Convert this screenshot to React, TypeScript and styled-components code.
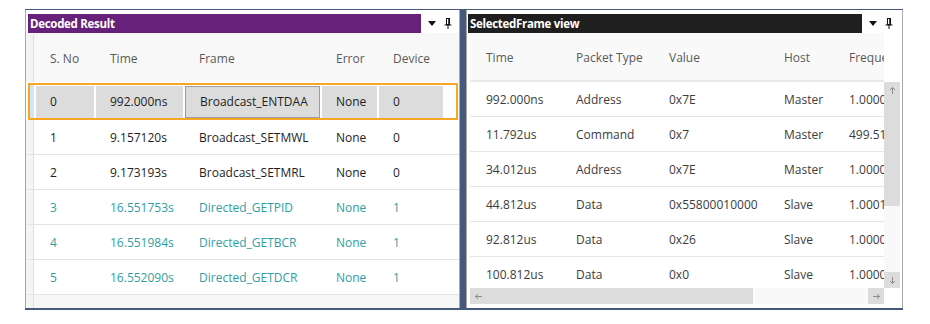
import React from "react";
import styled, { createGlobalStyle } from "styled-components";

const GlobalStyle = createGlobalStyle`
  body {
    margin: 0;
    background: #ffffff;
    font-family: "Open Sans", "Noto Sans", sans-serif;
  }
`;

const Frame = styled.div`
  margin: 9px 0 0 25px;
  width: 878px;
  height: 301px;
  box-sizing: border-box;
  padding: 1px 0 2px;
  display: flex;
  gap: 6px;
  background: #46597b;
`;

const Panel = styled.section<{ $w: number }>`
  width: ${(p) => p.$w}px;
  box-sizing: border-box;
  background: #ffffff;
  border-left: 1px solid #a9a9a9;
  border-right: 1px solid #a9a9a9;
  padding-top: 4px;
  display: flex;
  flex-direction: column;
  overflow: hidden;
`;

const TitleRow = styled.div<{ $pad: number }>`
  height: 19px;
  display: flex;
  padding-left: ${(p) => p.$pad}px;
  flex-shrink: 0;
`;

const TitleBar = styled.div<{ $bg: string }>`
  flex: 1;
  background: ${(p) => p.$bg};
  color: #ffffff;
  font-size: 11.5px;
  font-weight: 700;
  line-height: 19px;
  padding-left: 2px;
  letter-spacing: -0.3px;
  white-space: nowrap;
`;

const TitleTools = styled.div<{ $w: number }>`
  width: ${(p) => p.$w}px;
  box-sizing: border-box;
  flex-shrink: 0;
  display: flex;
  align-items: center;
  padding-left: 7px;
  gap: 8px;
`;

/* ---------- left grid ---------- */

const Gutter = styled.div<{ $sel?: boolean }>`
  width: ${(p) => (p.$sel ? 4 : 7)}px;
  align-self: stretch;
  flex-shrink: 0;
  background: ${(p) => (p.$sel ? "#cfe8f6" : "#f4f4f4")};
  border-right: ${(p) => (p.$sel ? "none" : "1px solid #dedede")};
`;

const LeftHeader = styled.div`
  height: 49px;
  display: flex;
  align-items: center;
  padding-top: 2px;
  box-sizing: border-box;
  background: #f8f8f8;
  flex-shrink: 0;
`;

const LeftRow = styled.div<{ $sel?: boolean }>`
  display: flex;
  align-items: center;
  flex-shrink: 0;
  box-sizing: border-box;
  height: ${(p) => (p.$sel ? 37 : 35)}px;
  margin: ${(p) => (p.$sel ? "1px 1px 0 2px" : "0")};
  border: ${(p) => (p.$sel ? "2px solid #f6a623" : "none")};
  border-bottom: ${(p) =>
    p.$sel ? "2px solid #f6a623" : "1px solid #e4e4e4"};
`;

const Cell = styled.div<{
  $w: number;
  $sel?: boolean;
  $focus?: boolean;
  $color?: string;
}>`
  width: ${(p) => p.$w}px;
  margin-left: 2px;
  box-sizing: border-box;
  height: ${(p) => (p.$sel ? "32px" : "auto")};
  display: flex;
  align-items: center;
  padding-left: 14px;
  font-size: 12px;
  color: ${(p) => p.$color ?? "#1e1e1e"};
  white-space: nowrap;
  background: ${(p) => (p.$sel ? "#dcdcdc" : "transparent")};
  border: ${(p) => (p.$focus ? "1px solid #9d9d9d" : "none")};
`;

const HeadCell = styled(Cell)`
  color: #595959;
`;

const LeftFiller = styled.div`
  flex: 1;
  display: flex;
  background: #f6f6f6;
`;

/* ---------- right grid ---------- */

const RightHeader = styled.div`
  height: 49px;
  display: flex;
  flex-shrink: 0;
`;

const HeaderViewport = styled.div`
  width: 414px;
  margin-left: 3px;
  display: flex;
  align-items: center;
  padding-top: 2px;
  overflow: hidden;
  background: #f9f9f9;
  border-bottom: 2px solid #e8e8e8;
  box-sizing: border-box;
`;

const Middle = styled.div`
  height: 206px;
  display: flex;
  flex-shrink: 0;
`;

const RowsViewport = styled.div`
  width: 414px;
  margin-left: 3px;
  overflow: hidden;
`;

const RightRow = styled.div`
  height: 35px;
  box-sizing: border-box;
  display: flex;
  align-items: center;
  border-bottom: 1px solid #e6e6e6;
`;

const RCell = styled.div<{ $w: number; $head?: boolean }>`
  width: ${(p) => p.$w}px;
  flex-shrink: 0;
  box-sizing: border-box;
  padding-left: 16px;
  font-size: 12px;
  white-space: nowrap;
  color: ${(p) => (p.$head ? "#595959" : "#3c3c3c")};
`;

const VScroll = styled.div`
  width: 16px;
  display: flex;
  flex-direction: column;
  background: #f9f9f9;
`;

const ScrollBtn = styled.div<{ $shade?: boolean }>`
  width: 16px;
  height: 16px;
  flex-shrink: 0;
  display: flex;
  align-items: center;
  justify-content: center;
  background: ${(p) => (p.$shade ? "#dcdcdc" : "transparent")};
`;

const VThumb = styled.div`
  height: 108px;
  background: #dcdcdc;
`;

const Track = styled.div`
  flex: 1;
`;

const HScroll = styled.div`
  height: 16px;
  width: 414px;
  margin-left: 3px;
  display: flex;
  flex-shrink: 0;
  background: #f9f9f9;
`;

const HThumb = styled.div`
  width: 283px;
  display: flex;
  align-items: center;
  background: #dcdcdc;
`;

/* ---------- icons ---------- */

const DropIcon = () => (
  <svg width="8" height="5" viewBox="0 0 8 5">
    <polygon points="0,0 8,0 4,5" fill="#111" />
  </svg>
);

const PinIcon = () => (
  <svg width="8" height="11" viewBox="0 0 8 11">
    <rect x="2.5" y="0.5" width="3" height="6" fill="none" stroke="#111" />
    <line x1="5" y1="0.5" x2="5" y2="6.5" stroke="#111" strokeWidth="1.5" />
    <line x1="0.5" y1="7" x2="7.5" y2="7" stroke="#111" />
    <line x1="4" y1="7" x2="4" y2="11" stroke="#111" />
  </svg>
);

const Arrow = ({ dir }: { dir: "up" | "down" | "left" | "right" }) => {
  const rot = { up: 0, right: 90, down: 180, left: 270 }[dir];
  return (
    <svg
      width="9"
      height="9"
      viewBox="0 0 9 9"
      style={{ transform: `rotate(${rot}deg)` }}
    >
      <path
        d="M4.5 1.5 L4.5 8 M2 4 L4.5 1.5 L7 4"
        fill="none"
        stroke="#8c8c8c"
        strokeWidth="1"
      />
    </svg>
  );
};

/* ---------- data ---------- */

const leftCols = [58, 87, 135, 55, 64];
const leftHead = ["S. No", "Time", "Frame", "Error", "Device"];
const teal = "#2f9ea4";
const leftRows = [
  ["0", "992.000ns", "Broadcast_ENTDAA", "None", "0"],
  ["1", "9.157120s", "Broadcast_SETMWL", "None", "0"],
  ["2", "9.173193s", "Broadcast_SETMRL", "None", "0"],
  ["3", "16.551753s", "Directed_GETPID", "None", "1"],
  ["4", "16.551984s", "Directed_GETBCR", "None", "1"],
  ["5", "16.552090s", "Directed_GETDCR", "None", "1"],
];

const rightCols = [90, 93, 115, 65, 100];
const rightHead = ["Time", "Packet Type", "Value", "Host", "Frequency"];
const rightRows = [
  ["992.000ns", "Address", "0x7E", "Master", "1.000000"],
  ["11.792us", "Command", "0x7", "Master", "499.5134"],
  ["34.012us", "Address", "0x7E", "Master", "1.000000"],
  ["44.812us", "Data", "0x55800010000", "Slave", "1.000100"],
  ["92.812us", "Data", "0x26", "Slave", "1.000000"],
  ["100.812us", "Data", "0x0", "Slave", "1.000000"],
];

export default function App() {
  return (
    <>
      <GlobalStyle />
      <Frame>
        <Panel $w={435}>
          <TitleRow $pad={2}>
            <TitleBar $bg="#68217a">Decoded Result</TitleBar>
            <TitleTools $w={38}>
              <DropIcon />
              <PinIcon />
            </TitleTools>
          </TitleRow>
          <LeftHeader>
            <Gutter />
            {leftHead.map((h, i) => (
              <HeadCell key={h} $w={leftCols[i]}>
                {h}
              </HeadCell>
            ))}
          </LeftHeader>
          {leftRows.map((r, ri) => {
            const sel = ri === 0;
            return (
              <LeftRow key={ri} $sel={sel}>
                <Gutter $sel={sel} />
                {r.map((v, ci) => (
                  <Cell
                    key={ci}
                    $w={leftCols[ci]}
                    $sel={sel}
                    $focus={sel && ci === 2}
                    $color={ri >= 3 ? teal : undefined}
                  >
                    {v}
                  </Cell>
                ))}
              </LeftRow>
            );
          })}
          <LeftFiller>
            <Gutter />
          </LeftFiller>
        </Panel>

        <Panel $w={437}>
          <TitleRow $pad={1}>
            <TitleBar $bg="#1f1f1f">SelectedFrame view</TitleBar>
            <TitleTools $w={40}>
              <DropIcon />
              <PinIcon />
            </TitleTools>
          </TitleRow>
          <RightHeader>
            <HeaderViewport>
              {rightHead.map((h, i) => (
                <RCell key={h} $w={rightCols[i]} $head>
                  {h}
                </RCell>
              ))}
            </HeaderViewport>
          </RightHeader>
          <Middle>
            <RowsViewport>
              {rightRows.map((r, ri) => (
                <RightRow key={ri}>
                  {r.map((v, ci) => (
                    <RCell key={ci} $w={rightCols[ci]}>
                      {v}
                    </RCell>
                  ))}
                </RightRow>
              ))}
            </RowsViewport>
            <VScroll>
              <ScrollBtn $shade>
                <Arrow dir="up" />
              </ScrollBtn>
              <VThumb />
              <Track />
              <ScrollBtn $shade>
                <Arrow dir="down" />
              </ScrollBtn>
            </VScroll>
          </Middle>
          <HScroll>
            <HThumb>
              <ScrollBtn>
                <Arrow dir="left" />
              </ScrollBtn>
            </HThumb>
            <Track />
            <ScrollBtn $shade>
              <Arrow dir="right" />
            </ScrollBtn>
          </HScroll>
        </Panel>
      </Frame>
    </>
  );
}
